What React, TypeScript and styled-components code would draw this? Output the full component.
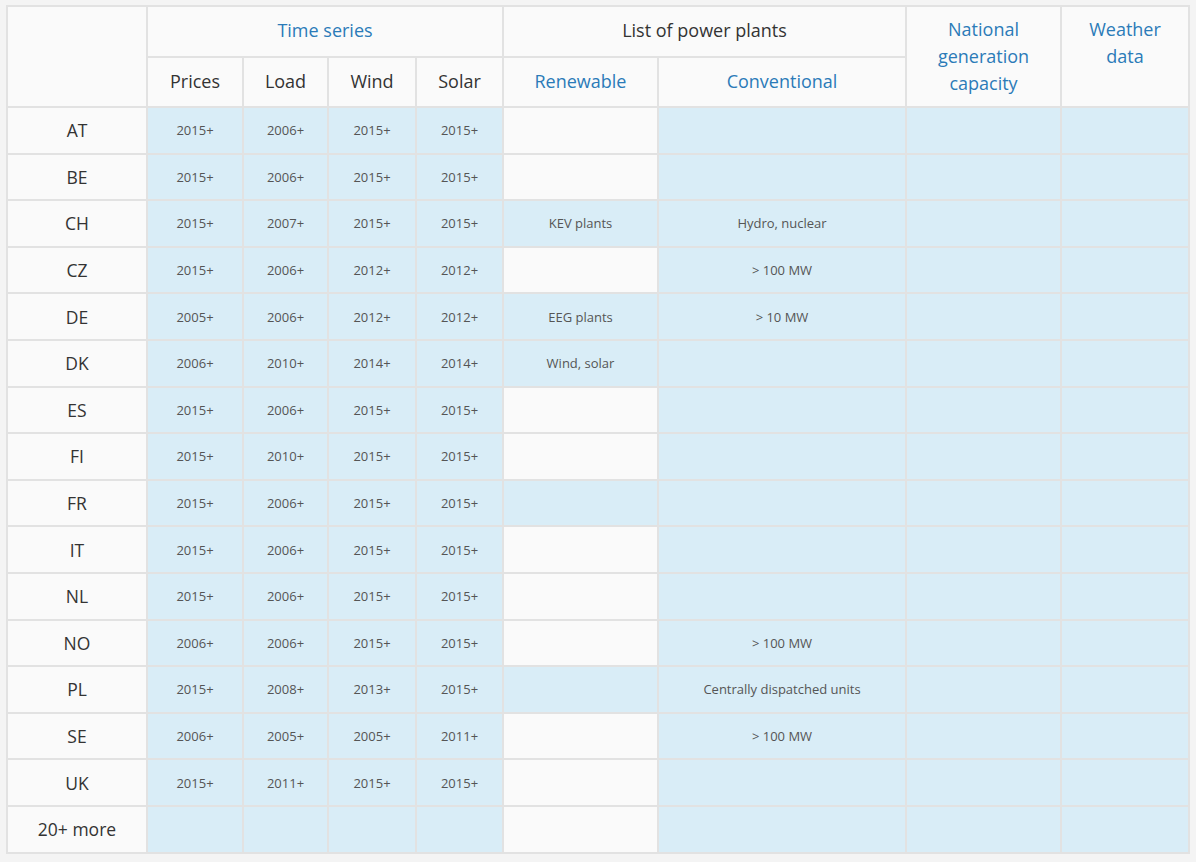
import React from "react";
import styled, { createGlobalStyle } from "styled-components";

const Global = createGlobalStyle`
  html, body {
    margin: 0;
    padding: 0;
    background: #f4f4f4;
  }
  body {
    font-family: "Open Sans", "Noto Sans", sans-serif;
  }
`;

const Page = styled.div`
  padding: 5px 8px 8px 6px;
`;

const Table = styled.table`
  border-collapse: collapse;
  table-layout: fixed;
  width: 1182px;
  border: 2px solid #e2e2e2;
`;

const Th = styled.th<{ $link?: boolean; $top?: boolean }>`
  border: 2px solid #e2e2e2;
  background: #fafafa;
  font-weight: 400;
  font-size: 18px;
  line-height: 27px;
  padding: ${(p) => (p.$top ? "9px 10px 9px" : "10px 8px 11px")};
  color: ${(p) => (p.$link ? "#2b7bb8" : "#333333")};
  vertical-align: ${(p) => (p.$top ? "top" : "middle")};
  text-align: center;
`;

const RowHead = styled.td`
  border: 2px solid #e2e2e2;
  background: #fafafa;
  font-size: 17.5px;
  color: #333333;
  text-align: center;
  height: 44.6px;
  padding: 0 6px;
`;

const Cell = styled.td<{ $blue?: boolean }>`
  border: 2px solid #e2e2e2;
  background: ${(p) => (p.$blue ? "#d9edf7" : "#fafafa")};
  font-size: 13px;
  color: #555555;
  text-align: center;
  padding: 0 6px;
`;

type Row = {
  code: string;
  ts: string[];
  ren: string;
  renBlue: boolean;
  conv: string;
};

const rows: Row[] = [
  { code: "AT", ts: ["2015+", "2006+", "2015+", "2015+"], ren: "", renBlue: false, conv: "" },
  { code: "BE", ts: ["2015+", "2006+", "2015+", "2015+"], ren: "", renBlue: false, conv: "" },
  { code: "CH", ts: ["2015+", "2007+", "2015+", "2015+"], ren: "KEV plants", renBlue: true, conv: "Hydro, nuclear" },
  { code: "CZ", ts: ["2015+", "2006+", "2012+", "2012+"], ren: "", renBlue: false, conv: "> 100 MW" },
  { code: "DE", ts: ["2005+", "2006+", "2012+", "2012+"], ren: "EEG plants", renBlue: true, conv: "> 10 MW" },
  { code: "DK", ts: ["2006+", "2010+", "2014+", "2014+"], ren: "Wind, solar", renBlue: true, conv: "" },
  { code: "ES", ts: ["2015+", "2006+", "2015+", "2015+"], ren: "", renBlue: false, conv: "" },
  { code: "FI", ts: ["2015+", "2010+", "2015+", "2015+"], ren: "", renBlue: false, conv: "" },
  { code: "FR", ts: ["2015+", "2006+", "2015+", "2015+"], ren: "", renBlue: true, conv: "" },
  { code: "IT", ts: ["2015+", "2006+", "2015+", "2015+"], ren: "", renBlue: false, conv: "" },
  { code: "NL", ts: ["2015+", "2006+", "2015+", "2015+"], ren: "", renBlue: false, conv: "" },
  { code: "NO", ts: ["2006+", "2006+", "2015+", "2015+"], ren: "", renBlue: false, conv: "> 100 MW" },
  { code: "PL", ts: ["2015+", "2008+", "2013+", "2015+"], ren: "", renBlue: true, conv: "Centrally dispatched units" },
  { code: "SE", ts: ["2006+", "2005+", "2005+", "2011+"], ren: "", renBlue: false, conv: "> 100 MW" },
  { code: "UK", ts: ["2015+", "2011+", "2015+", "2015+"], ren: "", renBlue: false, conv: "" },
  { code: "20+ more", ts: ["", "", "", ""], ren: "", renBlue: false, conv: "" },
];

const widths = [140, 96, 85, 88, 87, 155, 248, 155, 128];

export default function App() {
  return (
    <Page>
      <Global />
      <Table>
        <colgroup>
          {widths.map((w, i) => (
            <col key={i} style={{ width: w }} />
          ))}
        </colgroup>
        <thead>
          <tr>
            <Th rowSpan={2} />
            <Th colSpan={4} $link>
              Time series
            </Th>
            <Th colSpan={2}>List of power plants</Th>
            <Th rowSpan={2} $link $top>
              National generation capacity
            </Th>
            <Th rowSpan={2} $link $top>
              Weather data
            </Th>
          </tr>
          <tr>
            <Th>Prices</Th>
            <Th>Load</Th>
            <Th>Wind</Th>
            <Th>Solar</Th>
            <Th $link>Renewable</Th>
            <Th $link>Conventional</Th>
          </tr>
        </thead>
        <tbody>
          {rows.map((r) => (
            <tr key={r.code}>
              <RowHead>{r.code}</RowHead>
              {r.ts.map((t, i) => (
                <Cell key={i} $blue>
                  {t}
                </Cell>
              ))}
              <Cell $blue={r.renBlue}>{r.ren}</Cell>
              <Cell $blue>{r.conv}</Cell>
              <Cell $blue />
              <Cell $blue />
            </tr>
          ))}
        </tbody>
      </Table>
    </Page>
  );
}
